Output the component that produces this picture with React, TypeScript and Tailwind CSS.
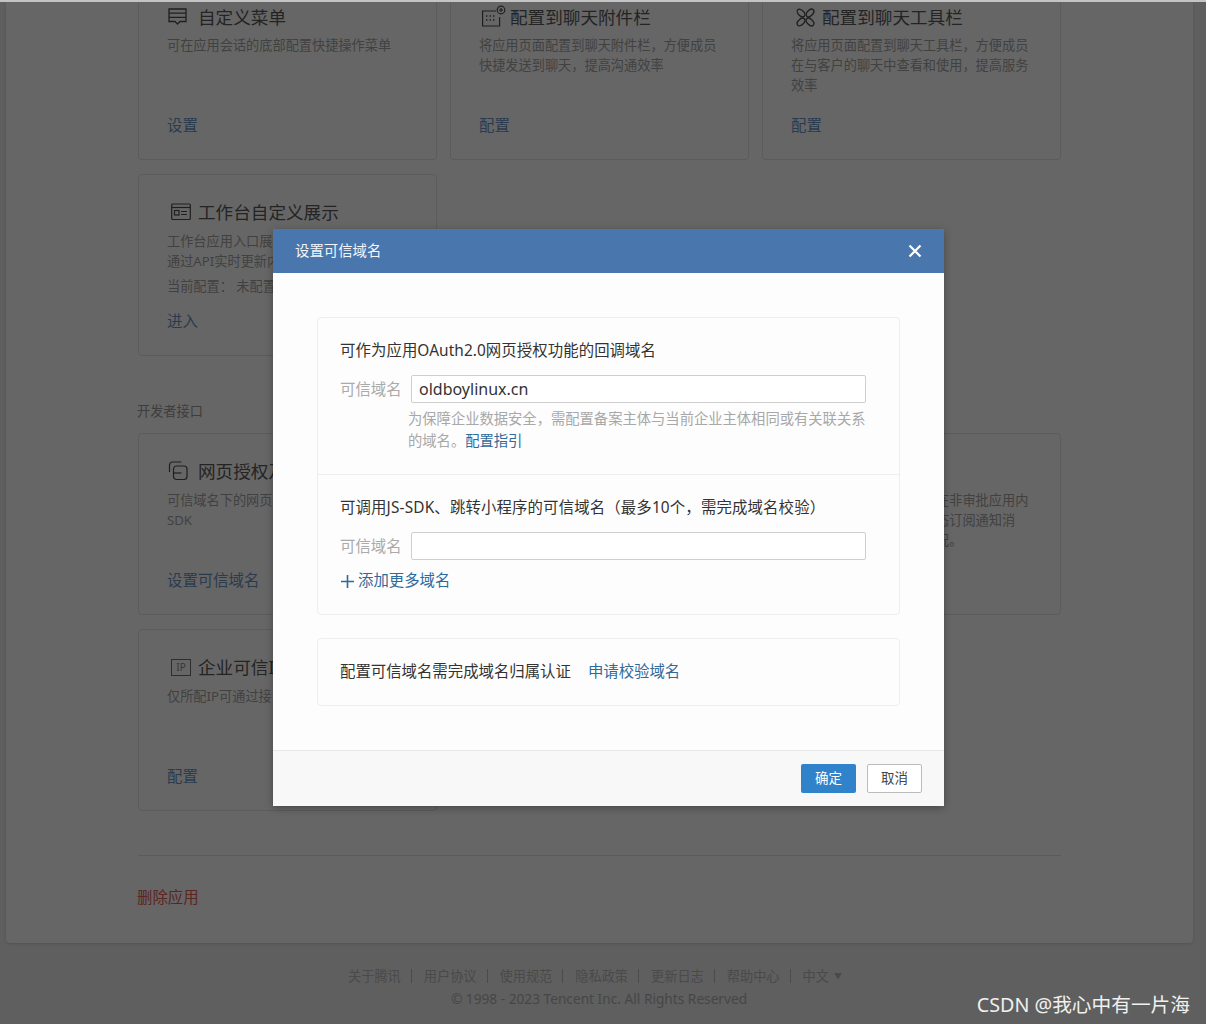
import React from "react";

const stroke = "#4e4e4e";

function MenuIcon() {
  return (
    <svg className="ml-[1px]" width="19" height="18" viewBox="0 0 19 18" fill="none" stroke={stroke} strokeWidth="1.3">
      <path d="M1 1h17v12.5h-6L9.5 16 7 13.5H1z" />
      <path d="M1 5.2h17M1 9.4h17" />
    </svg>
  );
}
function AttachIcon() {
  return (
    <svg className="ml-[3px] -mt-[3px]" width="24" height="22" viewBox="0 0 24 22" fill="none" stroke={stroke} strokeWidth="1.2">
      <path d="M14 6H0.6v15h17v-9" />
      <path d="M4 11h1.4M7.5 11h1.4M11 11h1.4M4 15h1.4M7.5 15h1.4M11 15h1.4" strokeWidth="1.6" />
      <circle cx="19" cy="5" r="3.8" />
      <path d="M19 3v4M17 5h4" />
    </svg>
  );
}
function ToolIcon() {
  return (
    <svg className="ml-[5px]" width="19" height="19" viewBox="0 0 19 19" fill="none" stroke={stroke} strokeWidth="1.3">
      <ellipse cx="5" cy="5" rx="4.6" ry="2.8" transform="rotate(45 5 5)" />
      <ellipse cx="14" cy="5" rx="4.6" ry="2.8" transform="rotate(-45 14 5)" />
      <ellipse cx="5" cy="14" rx="4.6" ry="2.8" transform="rotate(-45 5 14)" />
      <ellipse cx="14" cy="14" rx="4.6" ry="2.8" transform="rotate(45 14 14)" />
    </svg>
  );
}
function BoardIcon() {
  return (
    <svg className="ml-[4px]" width="20" height="18" viewBox="0 0 20 18" fill="none" stroke={stroke} strokeWidth="1.2">
      <rect x="0.7" y="1" width="18.6" height="15.5" rx="1" />
      <path d="M0.7 4.5h18.6" />
      <rect x="3.5" y="7.5" width="4.5" height="4.5" />
      <path d="M10 8.5h6M10 11.5h6" />
    </svg>
  );
}
function WebIcon() {
  return (
    <svg className="ml-[1px]" width="20" height="20" viewBox="0 0 20 20" fill="none" stroke={stroke} strokeWidth="1.2">
      <path d="M1.5 11V4a3 3 0 0 1 3-3h9" />
      <rect x="5.5" y="5" width="13.5" height="13.5" rx="3" />
      <path d="M5.5 12h8" />
    </svg>
  );
}
function IpIcon() {
  return (
    <span className="ml-[4px] flex h-[17px] w-[20px] items-center justify-center border border-[#707070] text-[10px] leading-none text-[#8a8a8a]">
      IP
    </span>
  );
}

type CardProps = {
  icon?: React.ReactNode;
  title?: string;
  lines?: string[];
  link?: string;
  first?: boolean;
  h: string;
  extra?: string;
};

function Card({ icon, title, lines = [], link, first, h, extra }: CardProps) {
  return (
    <div
      className={
        first
          ? `flex flex-col rounded-b border border-t-0 border-[#e6e6e6] pb-[23px] pl-[28px] pr-[28px] pt-[3px] ${h}`
          : `flex flex-col rounded border border-[#e6e6e6] pb-[23px] pl-[28px] pr-[28px] pt-[25px] ${h}`
      }
    >
      <div className="flex h-[24px] items-center whitespace-nowrap text-[17.6px] leading-[24px] text-[#5a5a5a]">
        <span className="flex w-[31px] shrink-0 items-center">{icon}</span>
        {title ? <span>{title}</span> : null}
      </div>
      <div className={first ? "mt-[6px] text-[13.2px] leading-[20px] text-[#a4a4a4]" : "mt-[7px] text-[13.2px] leading-[20px] text-[#a4a4a4]"}>
        {lines.map((l) => (
          <div key={l} className="whitespace-nowrap">
            {l}
          </div>
        ))}
        {extra ? <div className="mt-[5px] whitespace-nowrap">{extra}</div> : null}
      </div>
      {link ? <div className="mt-auto text-[15.4px] leading-[20px] text-[#6c93c4]">{link}</div> : null}
    </div>
  );
}

function DomainInput({ value }: { value: string }) {
  return (
    <div className="flex h-[28px] items-center">
      <span className="w-[71px] shrink-0 whitespace-nowrap pt-[2px] text-[15.4px] text-[#aaaaaa]">可信域名</span>
      <input
        readOnly
        value={value}
        className="h-[28px] w-[455px] rounded-[2px] border border-[#cfcfcf] bg-white px-[7px] text-[16px] text-[#333333] outline-none"
      />
    </div>
  );
}

const footerLinks = ["关于腾讯", "用户协议", "使用规范", "隐私政策", "更新日志", "帮助中心"];

export default function App() {
  return (
    <div className="relative h-[1024px] w-[1206px] overflow-hidden bg-[#ededed] font-['Noto_Sans','Noto_Sans_CJK_SC',sans-serif] [text-spacing-trim:space-all]">
      <div className="relative z-10 h-[2px] bg-[#c4c4c4]" />
      <div className="ml-[6px] mr-[13px] rounded-b bg-white px-[132px] pb-[35px] shadow-[0_1px_3px_rgba(0,0,0,0.15)]">
        <div className="grid grid-cols-3 gap-[13px]">
          <Card first h="h-[158px]" icon={<MenuIcon />} title="自定义菜单" lines={["可在应用会话的底部配置快捷操作菜单"]} link="设置" />
          <Card
            first
            h="h-[158px]"
            icon={<AttachIcon />}
            title="配置到聊天附件栏"
            lines={["将应用页面配置到聊天附件栏，方便成员", "快捷发送到聊天，提高沟通效率"]}
            link="配置"
          />
          <Card
            first
            h="h-[158px]"
            icon={<ToolIcon />}
            title="配置到聊天工具栏"
            lines={["将应用页面配置到聊天工具栏，方便成员", "在与客户的聊天中查看和使用，提高服务", "效率"]}
            link="配置"
          />
        </div>
        <div className="mt-[14px] grid grid-cols-3 gap-[13px]">
          <Card
            h="h-[182px]"
            icon={<BoardIcon />}
            title="工作台自定义展示"
            lines={["工作台应用入口展", "通过API实时更新内"]}
            extra="当前配置： 未配置"
            link="进入"
          />
        </div>
        <div className="-ml-px mb-[12px] mt-[45px] text-[13.2px] leading-[20px] text-[#9a9a9a]">开发者接口</div>
        <div className="grid grid-cols-3 gap-[13px]">
          <Card h="h-[182px]" icon={<WebIcon />} title="网页授权及" lines={["可信域名下的网页", "SDK"]} link="设置可信域名" />
          <Card h="h-[182px]" />
          <Card
            h="h-[182px]"
            lines={["审批流程引擎可以供应用在非审批应用内", "发起审批，并接收审批状态订阅通知消", "息，实时了解审批进展情况。"]}
          />
        </div>
        <div className="mt-[14px] grid grid-cols-3 gap-[13px]">
          <Card h="h-[182px]" icon={<IpIcon />} title="企业可信IP" lines={["仅所配IP可通过接"]} link="配置" />
        </div>
        <div className="mt-[44px] border-t border-[#e4e4e4]" />
        <div className="-ml-px mt-[32px] text-[15.4px] leading-[20px] text-[#e0604e]">删除应用</div>
      </div>
      <div className="mt-[23px] flex items-center justify-center pr-[16px] text-[13.2px] leading-[20px] text-[#b8b8b8]">
        {footerLinks.map((f) => (
          <React.Fragment key={f}>
            <span>{f}</span>
            <span className="ml-[10px] mr-[12px] h-[14px] w-px bg-[#b8b8b8]" />
          </React.Fragment>
        ))}
        <span>中文</span>
        <span className="ml-[5px] text-[8px]">▼</span>
      </div>
      <div className="mt-[3px] pr-[8px] text-center text-[13.7px] leading-[20px] text-[#b0b0b0]">
        © 1998 - 2023 Tencent Inc. All Rights Reserved
      </div>

      <div className="absolute inset-0 bg-black/60" />

      <div className="absolute left-[273px] top-[229px] flex w-[671px] flex-col bg-white shadow-[0_2px_8px_rgba(0,0,0,0.3)]">
        <div className="flex h-[44px] items-center justify-between bg-[#4a76ae] pl-[22px] pr-[22px]">
          <span className="text-[14.4px] text-[#f2f5f9]">设置可信域名</span>
          <svg width="14" height="14" viewBox="0 0 14 14" fill="none" stroke="#ffffff" strokeWidth="2.2">
            <path d="M1.5 1.5l11 11M12.5 1.5l-11 11" />
          </svg>
        </div>
        <div className="bg-[#fdfdfd] px-[44px] py-[44px]">
          <div className="rounded border border-[#eeeeee]">
            <div className="border-b border-[#eeeeee] pb-[22px] pl-[22px] pr-[33px] pt-[22px]">
              <div className="text-[15.4px] leading-[22px] tracking-[0.08px] text-[#333333]">可作为应用OAuth2.0网页授权功能的回调域名</div>
              <div className="mt-[13px]">
                <DomainInput value="oldboylinux.cn" />
              </div>
              <div className="ml-[68px] mt-[5px] text-[14.3px] leading-[22px] text-[#a8a8a8]">
                <div className="whitespace-nowrap">为保障企业数据安全，需配置备案主体与当前企业主体相同或有关联关系</div>
                <div>
                  的域名。<span className="text-[#2f6a9c]">配置指引</span>
                </div>
              </div>
            </div>
            <div className="pb-[23px] pl-[22px] pr-[33px] pt-[22px]">
              <div className="whitespace-nowrap text-[15.4px] leading-[22px] tracking-[0.15px] text-[#333333]">
                可调用JS-SDK、跳转小程序的可信域名（最多10个，需完成域名校验）
              </div>
              <div className="mt-[13px]">
                <DomainInput value="" />
              </div>
              <div className="mt-[11px] flex h-[20px] items-center gap-[3px] text-[15.4px] text-[#2f6a9c]">
                <svg width="15" height="15" viewBox="0 0 15 15" fill="none" stroke="#2f6a9c" strokeWidth="1.6">
                  <path d="M7.5 1v13M1 7.5h13" />
                </svg>
                <span>添加更多域名</span>
              </div>
            </div>
          </div>
          <div className="mt-[23px] flex h-[68px] items-center gap-[17px] rounded border border-[#eeeeee] pl-[22px] text-[15.4px] text-[#333333]">
            <span>配置可信域名需完成域名归属认证</span>
            <span className="text-[#2f6a9c]">申请校验域名</span>
          </div>
        </div>
        <div className="flex h-[56px] items-center justify-end gap-[11px] border-t border-[#e8e8e8] bg-[#f8f8f8] pr-[22px]">
          <button className="h-[29px] w-[55px] rounded-[2px] bg-[#3082cb] text-[13.5px] text-white">确定</button>
          <button className="h-[29px] w-[55px] rounded-[2px] border border-[#bcbcbc] bg-white text-[13.5px] text-[#444444]">
            取消
          </button>
        </div>
      </div>

      <div className="absolute bottom-[7px] right-[16px] whitespace-nowrap text-[19.7px] leading-[24px] text-[#f0f0f0]">
        CSDN @我心中有一片海
      </div>
    </div>
  );
}
